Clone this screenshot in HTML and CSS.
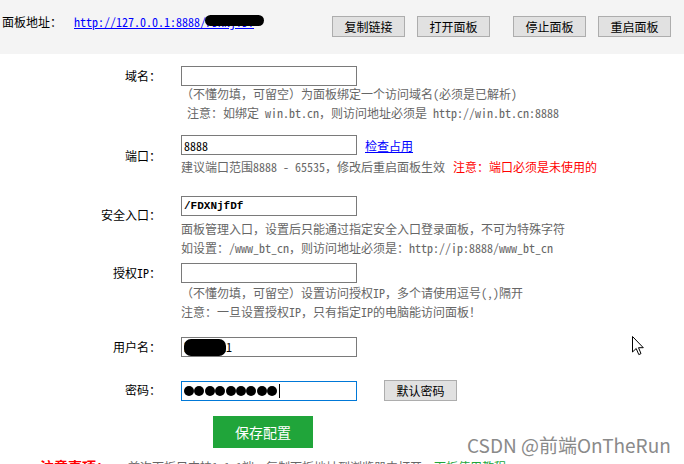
FILE: index.html
```html
<!DOCTYPE html>
<html lang="zh-CN">
<head>
  <meta charset="UTF-8" />
  <meta name="viewport" content="width=device-width, initial-scale=1.0"/>
  <title>面板设置</title>
  <link rel="stylesheet" href="styles.css">
</head>
<body>
  <div class="topbar">
    <span class="topbar-label">面板地址：</span>
    <a class="panel-url" href="#">http://127.0.0.1:8888/FDXNjfDf<span class="mask mask-url"></span></a>
    <div class="topbar-actions">
      <button class="btn">复制链接</button>
      <button class="btn">打开面板</button>
      <button class="btn btn-apart">停止面板</button>
      <button class="btn">重启面板</button>
    </div>
  </div>

  <div class="form">
    <div class="row row-domain">
      <label class="row-label">域名：</label>
      <div class="row-body">
        <input class="input" type="text" />
        <div class="help">
          <p>（不懂勿填，可留空）为面板绑定一个访问域名(必须是已解析)</p>
          <p>&nbsp;注意：如绑定 win.bt.cn，则访问地址必须是 http://win.bt.cn:8888</p>
        </div>
      </div>
    </div>

    <div class="row row-port">
      <label class="row-label">端口：</label>
      <div class="row-body">
        <div class="field">
          <input class="input" type="text" value="8888" />
          <a class="check-link" href="#">检查占用</a>
        </div>
        <div class="help">
          <p>建议端口范围8888 - 65535，修改后重启面板生效<span class="warn">注意：端口必须是未使用的</span></p>
        </div>
      </div>
    </div>

    <div class="row row-entry">
      <label class="row-label">安全入口：</label>
      <div class="row-body">
        <input class="input input-code" type="text" value="/FDXNjfDf" />
        <div class="help">
          <p>面板管理入口，设置后只能通过指定安全入口登录面板，不可为特殊字符</p>
          <p>如设置：/www_bt_cn，则访问地址必须是：http://ip:8888/www_bt_cn</p>
        </div>
      </div>
    </div>

    <div class="row row-ip">
      <label class="row-label">授权IP：</label>
      <div class="row-body">
        <input class="input" type="text" />
        <div class="help">
          <p>（不懂勿填，可留空）设置访问授权IP，多个请使用逗号(,)隔开</p>
          <p>注意：一旦设置授权IP，只有指定IP的电脑能访问面板！</p>
        </div>
      </div>
    </div>

    <div class="row row-user">
      <label class="row-label">用户名：</label>
      <div class="row-body">
        <div class="input input-fake">
          <span class="masked">btadmin1</span><span class="mask mask-user"></span>
        </div>
      </div>
    </div>

    <div class="row row-pass">
      <label class="row-label">密码：</label>
      <div class="row-body">
        <div class="field">
          <div class="input input-fake input-focus">
            <span class="dot"></span><span class="dot"></span><span class="dot"></span>
            <span class="dot"></span><span class="dot"></span><span class="dot"></span>
            <span class="dot"></span><span class="dot"></span><span class="dot"></span>
            <span class="caret"></span>
          </div>
          <button class="btn btn-default-pass">默认密码</button>
        </div>
      </div>
    </div>

    <button class="save-btn">保存配置</button>

    <div class="notice">
      <span class="notice-title">注意事项：</span>
      <span class="notice-text">首次面板只支持1.1.1端，复制面板地址到浏览器中打开，<a class="notice-link" href="#">面板使用教程</a></span>
    </div>
  </div>

  <svg class="cursor" width="13" height="20" viewBox="0 0 13 20">
    <path d="M0.5 0.5 L0.5 16 L4.2 12.5 L6.8 18.6 L9 17.6 L6.5 11.7 L11.3 11.7 Z" fill="#fff" stroke="#000" stroke-width="1" stroke-linejoin="round"/>
  </svg>

  <div class="watermark">CSDN @前端OnTheRun</div>
</body>
</html>
```

FILE: styles.css
```css
* {
  margin: 0;
  padding: 0;
  box-sizing: border-box;
}
body {
  font-family: "Noto Sans Mono CJK SC", "Noto Sans CJK SC", sans-serif;
  font-size: 12px;
  color: #000;
  background: #fff;
  width: 684px;
  height: 464px;
  overflow: hidden;
  position: relative;
}
.topbar {
  background: #f4f4f4;
  height: 54px;
  display: flex;
  align-items: flex-start;
  padding-top: 16px;
}
.topbar-label {
  margin-left: 2px;
  margin-top: -2px;
  line-height: 16px;
}
.panel-url {
  position: relative;
  margin-left: 12px;
  margin-top: -2px;
  line-height: 16px;
  color: #00f;
}
.mask {
  position: absolute;
  background: #000;
  border-radius: 6px;
}
.mask-url {
  left: 131px;
  top: 1px;
  width: 59px;
  height: 11px;
}
.topbar-actions {
  margin-left: auto;
  margin-right: 13px;
  display: flex;
  gap: 12px;
}
.btn {
  width: 73px;
  height: 21px;
  background: #e1e1e1;
  border: 1px solid #adadad;
  font-family: inherit;
  font-size: 12px;
  color: #000;
}
.btn-apart {
  margin-left: 11px;
}
.form {
  padding-top: 12px;
}
.row {
  display: flex;
  align-items: flex-start;
}
.row-label {
  width: 161px;
  margin-right: 20px;
  text-align: right;
  line-height: 20px;
  flex-shrink: 0;
}
.field {
  display: flex;
  align-items: center;
}
.input {
  display: block;
  width: 176px;
  height: 20px;
  border: 1px solid #7a7a7a;
  padding: 0 2px;
  font-family: inherit;
  font-size: 12px;
  color: #000;
  background: #fff;
  outline: none;
}
.input-code {
  font-family: "Liberation Mono", monospace;
  font-weight: bold;
  font-size: 11px;
}
.help {
  color: #666;
  line-height: 19px;
}
.warn {
  color: #f00;
  margin-left: 8px;
}
.check-link {
  color: #00f;
  margin-left: 8px;
}
.row-domain .help {
  margin-top: -2px;
}
.row-port {
  margin-top: 13px;
}
.row-port .row-label {
  padding-top: 11px;
}
.row-port .help {
  margin-top: 2px;
}
.row-entry {
  margin-top: 20px;
}
.row-entry .row-label {
  padding-top: 9px;
}
.row-entry .help {
  margin-top: 3px;
}
.row-ip {
  margin-top: 6px;
}
.row-user {
  margin-top: 16px;
}
.row-pass {
  margin-top: 23px;
}
.input-fake {
  position: relative;
  display: flex;
  align-items: center;
  line-height: 18px;
}
.masked {
  color: #000;
}
.mask-user {
  left: 2px;
  top: 1px;
  width: 42px;
  height: 17px;
  border-radius: 7px;
}
.input-focus {
  border-color: #0078d7;
  gap: 0.4px;
}
.dot {
  width: 10px;
  height: 10px;
  border-radius: 50%;
  background: #000;
}
.caret {
  width: 1px;
  height: 14px;
  background: #000;
  margin-left: 1px;
}
.btn-default-pass {
  margin-left: 27px;
}
.save-btn {
  display: block;
  margin: 15px 0 0 213px;
  width: 100px;
  height: 32px;
  background: #20a53a;
  border: none;
  color: #fff;
  font-family: inherit;
  font-size: 14px;
}
.notice {
  display: flex;
  align-items: baseline;
  margin-top: 9px;
  line-height: 18px;
}
.notice-title {
  margin-left: 40px;
  color: #f00;
  font-weight: bold;
  font-size: 14px;
  width: 88px;
}
.notice-text {
  color: #666;
}
.notice-link {
  color: #20a53a;
  text-decoration: none;
}
.cursor {
  position: absolute;
  left: 632px;
  top: 336px;
}
.watermark {
  position: absolute;
  left: 467px;
  top: 431px;
  font-family: "Noto Sans CJK SC", sans-serif;
  font-size: 19px;
  color: #8a8a8a;
  text-shadow: 0 0 2px #fff, 0 0 2px #fff;
}
```
